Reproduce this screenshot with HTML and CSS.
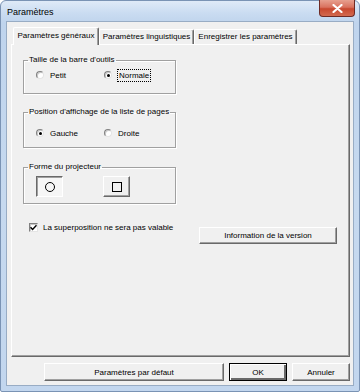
FILE: index.html
```html
<!DOCTYPE html>
<html lang="fr">
<head>
<meta charset="utf-8">
<title>Paramètres</title>
<link rel="stylesheet" href="styles.css">
</head>
<body>
<div class="window">
  <div class="titlebar">
    <span class="title">Paramètres</span>
    <span class="close"><svg width="11" height="9" viewBox="0 0 11 9"><path d="M1.5 1 L9.5 8 M9.5 1 L1.5 8" stroke="#fff" stroke-width="2.2" stroke-linecap="round"/></svg></span>
  </div>
  <div class="client">
    <div class="tabs">
      <div class="tab active">Paramètres généraux</div>
      <div class="tab t2">Paramètres linguistiques</div>
      <div class="tab t3">Enregistrer les paramètres</div>
    </div>
    <div class="panel">
      <fieldset class="group g1">
        <legend>Taille de la barre d'outils</legend>
        <div class="radios">
          <label class="radio"><span class="rb"></span>Petit</label>
          <label class="radio second"><span class="rb on"></span><span class="focus">Normale</span></label>
        </div>
      </fieldset>
      <fieldset class="group g2">
        <legend>Position d'affichage de la liste de pages</legend>
        <div class="radios">
          <label class="radio"><span class="rb on"></span>Gauche</label>
          <label class="radio second"><span class="rb"></span>Droite</label>
        </div>
      </fieldset>
      <fieldset class="group g3">
        <legend>Forme du projecteur</legend>
        <div class="shapes">
          <span class="shape pressed"><span class="circle"></span></span>
          <span class="shape"><span class="square"></span></span>
        </div>
      </fieldset>
      <div class="row">
        <label class="check"><span class="cb"><svg width="7" height="7" viewBox="0 0 7 7"><path d="M0.5 3.2 L2.6 5.4 L6.5 1.2" stroke="#000" stroke-width="1.5" fill="none"/></svg></span>La superposition ne sera pas valable</label>
        <span class="btn info">Information de la version</span>
      </div>
    </div>
    <div class="buttons">
      <span class="btn defaults">Paramètres par défaut</span>
      <span class="btn ok">OK</span>
      <span class="btn cancel">Annuler</span>
    </div>
  </div>
</div>
</body>
</html>
```
FILE: styles.css
```css
html, body {
  margin: 0;
  padding: 0;
  background: #ffffff;
}
body {
  font-family: "Liberation Sans", Arial, sans-serif;
  font-size: 8px;
  color: #000;
}
.window {
  box-sizing: border-box;
  width: 360px;
  height: 392px;
  border: 1px solid #7a93b4;
  border-radius: 6px 6px 2px 2px;
  background: linear-gradient(180deg, #dfeaf7 0px, #cadcf1 12px, #bfd4ed 22px, #c6d9ef 200px, #c2d6ee 392px);
  padding: 0 5px 5px 5px;
  display: flex;
  flex-direction: column;
}
.titlebar {
  height: 20px;
  display: flex;
  align-items: flex-start;
  justify-content: space-between;
}
.title {
  font-size: 9px;
  line-height: 9px;
  margin-top: 7px;
  margin-left: 1px;
  color: #000;
}
.close {
  width: 36px;
  height: 17px;
  margin-top: -1px;
  margin-right: -1px;
  box-sizing: border-box;
  border: 1px solid #6e2a24;
  border-top: none;
  border-radius: 0 0 4px 4px;
  background: linear-gradient(180deg, #e7a08f 0%, #d9725f 45%, #c8482f 55%, #d26a4f 100%);
  display: flex;
  align-items: center;
  justify-content: center;
}
.client {
  box-sizing: border-box;
  height: 365px;
  border: 1px solid #98acc4;
  background: #f0f0f0;
  padding: 5px 3px 0 4px;
  display: flex;
  flex-direction: column;
}
.tabs {
  height: 17px;
  display: flex;
  align-items: flex-end;
  padding-left: 2px;
  position: relative;
  z-index: 1;
}
.tab {
  box-sizing: border-box;
  height: 15px;
  line-height: 13px;
  border: 1px solid;
  border-color: #ffffff #696969 transparent #ffffff;
  box-shadow: inset -1px 0 0 #a0a0a0;
  border-bottom: none;
  border-radius: 2px 2px 0 0;
  background: #f0f0f0;
  text-align: center;
  white-space: nowrap;
}
.tab.active {
  width: 86px;
  height: 18px;
  margin-bottom: -1px;
  line-height: 15px;
}
.tab.t2 { width: 95px; }
.tab.t3 { width: 103px; }
.panel {
  box-sizing: border-box;
  height: 313px;
  border: 1px solid;
  border-color: #ffffff #696969 #696969 #ffffff;
  box-shadow: inset -1px -1px 0 #a0a0a0;
  padding: 10px 12px 0 11px;
  display: flex;
  flex-direction: column;
}
.group {
  box-sizing: border-box;
  width: 153px;
  margin: 0;
  padding: 0 0 0 4px;
  border: 1px solid #a0a0a0;
  box-shadow: 1px 1px 0 #ffffff, inset 1px 1px 0 #ffffff;
  min-inline-size: 0;
}
.group legend {
  padding: 0 1px;
  margin: 0;
  line-height: 10px;
  height: 10px;
  white-space: nowrap;
}
.g1 { height: 39px; }
.g2 { height: 41px; margin-top: 13px; }
.g3 { height: 42px; margin-top: 14px; }
.radios {
  display: flex;
  margin-top: 4px;
  margin-left: 8px;
}
.g2 .radios { margin-top: 10px; }
.radio {
  display: flex;
  align-items: center;
  gap: 6px;
  width: 68px;
  height: 12px;
}
.rb {
  box-sizing: border-box;
  width: 8px;
  height: 8px;
  border-radius: 50%;
  border: 1px solid;
  border-color: #808080 #e4e4e4 #e4e4e4 #808080;
  background: #fff;
  box-shadow: inset 1px 1px 0 #c8c8c8;
  display: flex;
  align-items: center;
  justify-content: center;
}
.rb.on::after {
  content: "";
  width: 3px;
  height: 3px;
  border-radius: 50%;
  background: #000;
}
.focus {
  outline: 1px dotted #000;
  outline-offset: 0;
  padding: 0 1px;
  line-height: 11px;
}
.shapes {
  display: flex;
  gap: 40px;
  margin-top: 4px;
  margin-left: 8px;
}
.shape {
  box-sizing: border-box;
  width: 27px;
  height: 21px;
  border: 1px solid;
  border-color: #ffffff #696969 #696969 #ffffff;
  box-shadow: inset -1px -1px 0 #a0a0a0;
  display: flex;
  align-items: center;
  justify-content: center;
}
.shape.pressed {
  border-color: #696969 #ffffff #ffffff #696969;
  box-shadow: inset 1px 1px 0 #a0a0a0;
  background: #f6f6f6;
}
.circle {
  box-sizing: border-box;
  width: 10px;
  height: 10px;
  border: 1.5px solid #000;
  border-radius: 50%;
  margin: 1px 0 0 1px;
}
.square {
  box-sizing: border-box;
  width: 10px;
  height: 10px;
  border: 1.5px solid #000;
}
.row {
  display: flex;
  justify-content: space-between;
  align-items: flex-start;
  margin-top: 18px;
}
.check {
  display: flex;
  align-items: center;
  gap: 5px;
  margin-left: 6px;
  height: 10px;
}
.cb {
  box-sizing: border-box;
  width: 9px;
  height: 9px;
  border: 1px solid;
  border-color: #808080 #e4e4e4 #e4e4e4 #808080;
  background: #fff;
  box-shadow: inset 1px 1px 0 #c8c8c8;
  display: flex;
  align-items: center;
  justify-content: center;
}
.btn {
  box-sizing: border-box;
  height: 17px;
  border: 1px solid;
  border-color: #ffffff #696969 #696969 #ffffff;
  box-shadow: inset -1px -1px 0 #a0a0a0;
  background: #f0f0f0;
  display: flex;
  align-items: center;
  justify-content: center;
  white-space: nowrap;
}
.info {
  width: 138px;
  margin-top: 5px;
}
.buttons {
  display: flex;
  justify-content: flex-end;
  gap: 5px;
  margin-top: 6px;
}
.buttons .btn { height: 18px; }
.defaults { width: 180px; }
.ok {
  width: 58px;
  outline: 1px solid #000;
  outline-offset: -1px;
  box-shadow: inset 1px 1px 0 #ffffff, inset -2px -2px 0 #696969;
}
.cancel { width: 58px; }
```
